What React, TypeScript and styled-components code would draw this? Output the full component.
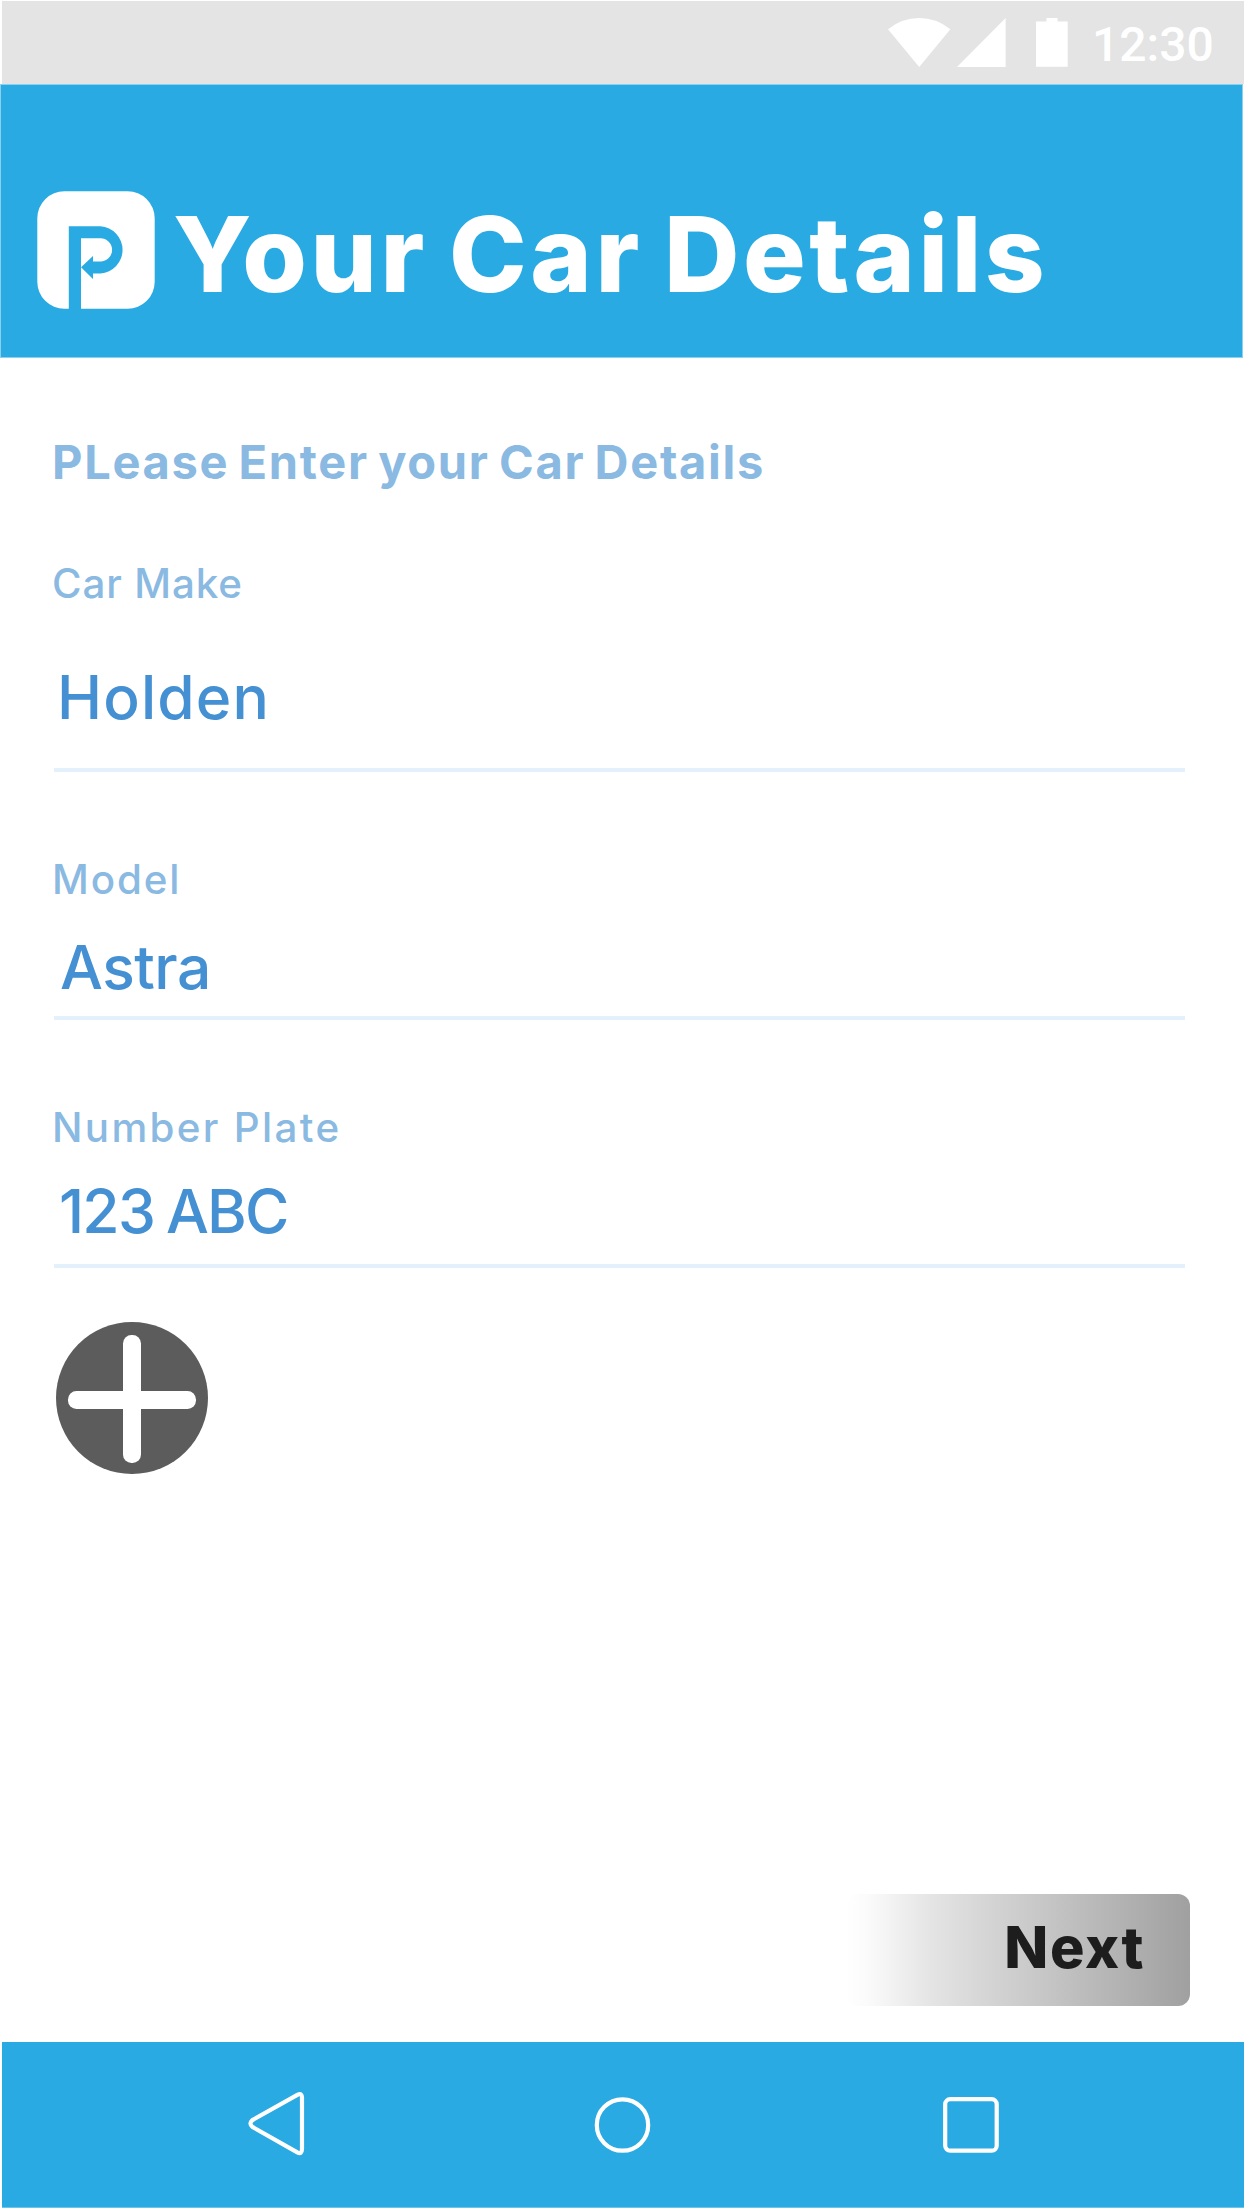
import React from "react";
import styled, { createGlobalStyle } from "styled-components";

const blue = "#29aae2";

const GlobalStyle = createGlobalStyle`
  *, *::before, *::after { box-sizing: border-box; }
  body { margin: 0; background: #fff; }
`;

const Screen = styled.div`
  display: flex;
  flex-direction: column;
  width: 1246px;
  height: 2210px;
  background: #fff;
  font-family: Inter, "Open Sans", sans-serif;
`;

const StatusBar = styled.div`
  display: flex;
  align-items: flex-start;
  height: 83px;
  margin: 1px 2px 0;
  padding: 17px 30px 0 886px;
  background: #e4e4e4;
  color: #fff;
`;

const StatusIcons = styled.svg`
  display: block;
  width: 180px;
  height: 50px;
  flex: none;
`;

const Clock = styled.time`
  margin-left: 24px;
  margin-top: -1px;
  font: 500 48px/56px Roboto, sans-serif;
  letter-spacing: 0;
  white-space: nowrap;
`;

const Header = styled.header`
  display: flex;
  align-items: flex-start;
  width: 1243px;
  height: 274px;
  padding: 106px 0 0 36px;
  border: 1px solid #8bd0ef;
  background: ${blue};
`;

const Logo = styled.svg`
  display: block;
  flex: none;
  width: 118px;
  height: 118px;
`;

const Title = styled.h1`
  margin: 0 0 0 18px;
  color: #fff;
  font-size: 104.5px;
  font-weight: 800;
  line-height: 126px;
  letter-spacing: 3.6px;
  word-spacing: -5.5px;
  white-space: nowrap;
`;

const Form = styled.main`
  display: flex;
  flex-direction: column;
  flex: 1;
  padding: 76px 56px 36px 54px;
`;

const Intro = styled.h2`
  margin: 0 0 -13px -2px;
  color: #8ab9e2;
  font-size: 47px;
  font-weight: 700;
  line-height: 56px;
  letter-spacing: 1.7px;
  word-spacing: -3.5px;
  white-space: nowrap;
`;

const Field = styled.div<{ $above: number; $bottom: number }>`
  display: flex;
  flex-direction: column;
  width: 1131px;
  margin-top: ${(p) => p.$above}px;
  padding-bottom: ${(p) => p.$bottom}px;
  border-bottom: 4px solid #e4f0fb;
`;

const Label = styled.label<{ $spacing: number }>`
  margin-left: -2px;
  color: #8ab9e2;
  font-size: 40.3px;
  font-weight: 500;
  line-height: 48px;
  letter-spacing: ${(p) => p.$spacing}px;
`;

const Value = styled.div<{ $top: number; $spacing: number; $indent: number }>`
  margin-top: ${(p) => p.$top}px;
  margin-left: ${(p) => p.$indent}px;
  color: #4490d2;
  font-size: 60.5px;
  font-weight: 500;
  line-height: 72px;
  letter-spacing: ${(p) => p.$spacing}px;
  word-spacing: -2.5px;
`;

const AddButton = styled.button`
  width: 152px;
  height: 152px;
  margin: 54px 0 0 2px;
  padding: 0;
  border: 0;
  border-radius: 50%;
  background: #5c5c5c;

  svg { display: block; }
`;

const NextButton = styled.button`
  align-self: flex-end;
  width: 344px;
  height: 112px;
  margin-top: auto;
  padding: 0 45px 7px 0;
  border: 0;
  border-radius: 12px;
  background: linear-gradient(90deg, #fff 0%, #fbfbfb 6%, #f4f4f4 12%, #e5e5e5 24%, #d2d2d2 44%, #c4c4c4 60%, #b4b4b4 78%, #a0a0a0 100%);
  color: #1d1d1d;
  font: 800 57.5px/70px Inter, sans-serif;
  letter-spacing: 1.6px;
  text-align: right;
`;

const NavBar = styled.nav`
  display: grid;
  grid-template-columns: repeat(3, 64px);
  justify-content: space-between;
  align-items: start;
  height: 166px;
  margin: 0 2px 2px;
  padding: 47px 240px 0 242px;
  border-bottom: 1px solid #6cc4ea;
  background: ${blue};
`;

const NavIcon = styled.svg`
  display: block;
  width: 64px;
  height: 70px;
  fill: none;
  stroke: #fff;
  stroke-width: 4.2;
  stroke-linejoin: round;
`;

const fields = [
  { label: "Car Make", value: "Holden", above: 83, top: 53, bottom: 35, labelSpacing: 0.9, spacing: 1.15, indent: 3 },
  { label: "Model", value: "Astra", above: 84, top: 27, bottom: 13, labelSpacing: 1.9, spacing: -0.49, indent: 6 },
  { label: "Number Plate", value: "123 ABC", above: 84, top: 23, bottom: 17, labelSpacing: 2.35, spacing: -1.75, indent: 5 },
];

export default function App() {
  return (
    <Screen>
      <GlobalStyle />
      <StatusBar>
        <StatusIcons viewBox="0 0 180 50" fill="#fff">
          <path d="M0 11.2Q14 0 31.2 0T62.4 11.2L31.2 49Z" />
          <path d="M117.6 0V49H69Z" />
          <path d="M148 3.5h10.5V0h11v3.5h10.2V48.7H148Z" />
        </StatusIcons>
        <Clock>12:30</Clock>
      </StatusBar>
      <Header>
        <Logo viewBox="0 0 118 118">
          <path
            fill="#fff"
            d="M27.5.3h63A27 27 0 0 1 117.7 27.5v63A27 27 0 0 1 90.5 117.7H44V47.3H63.5a11.6 11.6 0 0 1 0 23.2H56V65L44 76.3 56 88V82.4h7.5a23.6 23.6 0 0 0 0-47.1H31.8V117.7H27.5A27 27 0 0 1 .3 90.5v-63A27 27 0 0 1 27.5.3Z"
          />
        </Logo>
        <Title>Your Car Details</Title>
      </Header>
      <Form>
        <Intro>PLease Enter your Car Details</Intro>
        {fields.map((f) => (
          <Field key={f.label} $above={f.above} $bottom={f.bottom}>
            <Label $spacing={f.labelSpacing}>{f.label}</Label>
            <Value $top={f.top} $spacing={f.spacing} $indent={f.indent}>
              {f.value}
            </Value>
          </Field>
        ))}
        <AddButton aria-label="Add">
          <svg width="152" height="152" viewBox="0 0 152 152" fill="#fff">
            <rect x="67" y="13" width="18" height="128" rx="8.5" />
            <rect x="12" y="69" width="128" height="18" rx="8.5" />
          </svg>
        </AddButton>
        <NextButton>Next</NextButton>
      </Form>
      <NavBar>
        <NavIcon viewBox="0 0 64 70">
          <path d="M53.8 5.6Q58 3.7 58 8.5V60Q58 65.8 53.3 63.3L8.4 37.9Q4.5 34.7 8.4 31.1Z" />
        </NavIcon>
        <NavIcon viewBox="0 0 64 70">
          <circle cx="30.5" cy="36" r="25.7" />
        </NavIcon>
        <NavIcon viewBox="0 0 64 70">
          <rect x="5.2" y="10.2" width="51.5" height="51.5" rx="5" />
        </NavIcon>
      </NavBar>
    </Screen>
  );
}
